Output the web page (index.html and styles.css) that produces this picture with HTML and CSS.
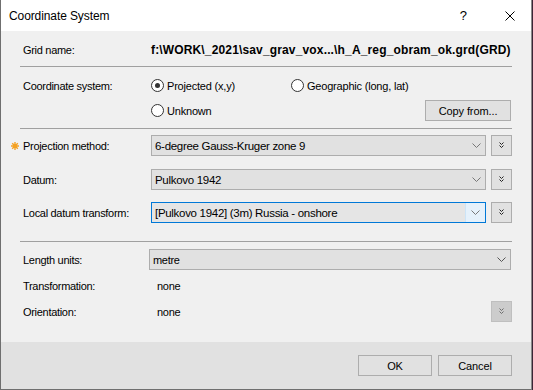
FILE: index.html
```html
<!DOCTYPE html>
<html lang="en">
<head>
  <meta charset="UTF-8">
  <title>Coordinate System</title>
  <link rel="stylesheet" href="styles.css">
</head>
<body>
<div class="window">
  <div class="titlebar">
    <span class="title">Coordinate System</span>
    <span class="help">?</span>
    <svg class="close" width="10" height="10" viewBox="0 0 10 10">
      <path d="M0.5 0.5 L9.5 9.5 M9.5 0.5 L0.5 9.5" stroke="#000" stroke-width="1" fill="none"/>
    </svg>
  </div>

  <div class="content">
    <div class="row row-grid">
      <span class="label">Grid name:</span>
      <span class="path">f:\WORK\_2021\sav_grav_vox...\h_A_reg_obram_ok.grd(GRD)</span>
    </div>
    <div class="sep"></div>

    <div class="row row-radio1">
      <span class="label">Coordinate system:</span>
      <div class="radios">
        <label class="radio radio-first"><span class="dot checked"></span>Projected (x,y)</label>
        <label class="radio"><span class="dot"></span>Geographic (long, lat)</label>
      </div>
    </div>
    <div class="row row-radio2">
      <span class="label"></span>
      <div class="radios">
        <label class="radio"><span class="dot"></span>Unknown</label>
        <button class="btn btn-copy">Copy from...</button>
      </div>
    </div>
    <div class="sep sep-2"></div>

    <div class="row row-proj">
      <span class="label"><svg class="star" width="8" height="8" viewBox="0 0 8 8">
        <path d="M4 0 V8 M0 4 H8 M1.2 1.2 L6.8 6.8 M6.8 1.2 L1.2 6.8" stroke="#f4a020" stroke-width="1.4" fill="none"/>
      </svg>Projection method:</span>
      <div class="combo-line">
        <div class="combo"><span>6-degree Gauss-Kruger zone 9</span><svg class="arrow" width="9" height="5" viewBox="0 0 9 5"><path d="M0.5 0.5 L4.5 4.5 L8.5 0.5" stroke="#777" fill="none"/></svg></div>
        <div class="more"><svg width="5" height="7" viewBox="0 0 5 7"><path d="M0.5 0.5 L2.5 2.5 L4.5 0.5 M0.5 3.5 L2.5 5.5 L4.5 3.5" stroke="#222" fill="none"/></svg></div>
      </div>
    </div>
    <div class="row row-datum">
      <span class="label">Datum:</span>
      <div class="combo-line">
        <div class="combo"><span>Pulkovo 1942</span><svg class="arrow" width="9" height="5" viewBox="0 0 9 5"><path d="M0.5 0.5 L4.5 4.5 L8.5 0.5" stroke="#777" fill="none"/></svg></div>
        <div class="more"><svg width="5" height="7" viewBox="0 0 5 7"><path d="M0.5 0.5 L2.5 2.5 L4.5 0.5 M0.5 3.5 L2.5 5.5 L4.5 3.5" stroke="#222" fill="none"/></svg></div>
      </div>
    </div>
    <div class="row row-local">
      <span class="label">Local datum transform:</span>
      <div class="combo-line">
        <div class="combo combo-focus"><span>[Pulkovo 1942] (3m) Russia - onshore</span><div class="drop"><svg class="arrow" width="9" height="5" viewBox="0 0 9 5"><path d="M0.5 0.5 L4.5 4.5 L8.5 0.5" stroke="#777" fill="none"/></svg></div></div>
        <div class="more"><svg width="5" height="7" viewBox="0 0 5 7"><path d="M0.5 0.5 L2.5 2.5 L4.5 0.5 M0.5 3.5 L2.5 5.5 L4.5 3.5" stroke="#222" fill="none"/></svg></div>
      </div>
    </div>
    <div class="sep sep-3"></div>

    <div class="row row-units">
      <span class="label">Length units:</span>
      <div class="combo combo-wide"><span>metre</span><svg class="arrow" width="9" height="5" viewBox="0 0 9 5"><path d="M0.5 0.5 L4.5 4.5 L8.5 0.5" stroke="#555" fill="none"/></svg></div>
    </div>
    <div class="row row-trans">
      <span class="label">Transformation:</span>
      <span class="value">none</span>
    </div>
    <div class="row row-orient">
      <span class="label">Orientation:</span>
      <div class="combo-line">
        <span class="value">none</span>
        <div class="more more-off"><svg width="5" height="7" viewBox="0 0 5 7"><path d="M0.5 0.5 L2.5 2.5 L4.5 0.5 M0.5 3.5 L2.5 5.5 L4.5 3.5" stroke="#6d6d6d" fill="none"/></svg></div>
      </div>
    </div>
  </div>

  <div class="footer">
    <button class="btn btn-ok">OK</button>
    <button class="btn btn-ok">Cancel</button>
  </div>
</div>
</body>
</html>
```

FILE: styles.css
```css
body {
  margin: 0;
  background: #3b2436;
  font-family: "Liberation Sans", Arial, sans-serif;
  font-size: 11px;
  color: #000;
}
.window {
  width: 530px;
  height: 389px;
  border-left: 1px solid #6f6f6f;
  border-right: 1px solid #8a8a8a;
  border-bottom: 1px solid #6f6f6f;
  background: #f0f0f0;
  display: flex;
  flex-direction: column;
}

/* title bar */
.titlebar {
  height: 31px;
  background: #fff;
  display: flex;
  align-items: center;
  flex-shrink: 0;
}
.title {
  font-size: 12px;
  letter-spacing: -0.1px;
  margin-left: 8px;
  flex: 1;
}
.help {
  font-size: 13px;
  margin-right: 38px;
}
.close {
  margin-right: 16px;
}

/* body */
.content {
  flex: 1;
  padding: 0 19px 0 19px;
}
.row {
  display: grid;
  grid-template-columns: 131px 1fr;
  align-items: center;
  height: 21px;
}
.label {
  padding-left: 3px;
  letter-spacing: -0.3px;
  white-space: nowrap;
  display: flex;
  align-items: center;
}
.star {
  margin-left: -12px;
  margin-right: 4px;
  flex-shrink: 0;
}
.row-grid {
  height: 35px;
  padding-top: 3px;
  box-sizing: border-box;
}
.path {
  font-weight: bold;
  font-size: 12px;
  letter-spacing: 0.15px;
  white-space: nowrap;
}
.sep {
  height: 1px;
  background: #a0a0a0;
}
.row-radio1 { margin-top: 8px; }
.row-radio2 { margin-top: 4px; }
.sep-2 { margin-top: 7px; }
.row-proj { margin-top: 6px; }
.row-datum { margin-top: 13px; }
.row-local { margin-top: 12px; }
.sep-3 { margin-top: 18px; }
.row-units { margin-top: 7px; }
.row-trans { margin-top: 5px; }
.row-orient { margin-top: 5px; }

.radios {
  display: flex;
  align-items: center;
}
.radio {
  display: flex;
  align-items: center;
  letter-spacing: -0.2px;
}
.radio-first {
  width: 140px;
}
.dot {
  width: 11px;
  height: 11px;
  border: 1px solid #333;
  border-radius: 50%;
  background: #fff;
  margin-right: 3px;
  position: relative;
}
.dot.checked::after {
  content: "";
  position: absolute;
  left: 3px;
  top: 3px;
  width: 5px;
  height: 5px;
  border-radius: 50%;
  background: #333;
}

.btn {
  font-family: "Liberation Sans", Arial, sans-serif;
  font-size: 11px;
  letter-spacing: -0.1px;
  background: #e1e1e1;
  border: 1px solid #adadad;
  height: 21px;
  padding: 0;
  color: #000;
}
.btn-copy {
  margin-left: auto;
  margin-right: 1px;
  width: 86px;
}

/* combo boxes */
.combo-line {
  display: flex;
  align-items: center;
  gap: 5px;
}
.combo {
  flex: 1;
  height: 21px;
  box-sizing: border-box;
  background: #e1e1e1;
  border: 1px solid #adadad;
  display: flex;
  align-items: center;
  padding-left: 3px;
  font-size: 11.5px;
  letter-spacing: -0.3px;
}
.combo span {
  flex: 1;
}
.combo .arrow {
  margin-right: 4px;
}
.combo-focus {
  border-color: #0078d7;
  background: #e5e5e5;
}
.combo-focus .drop {
  width: 19px;
  height: 19px;
  background: #e5f1fb;
  border-left: 1px solid #cce4f7;
  display: flex;
  align-items: center;
  justify-content: flex-end;
}
.combo-focus .drop .arrow {
  margin-right: 5px;
}
.combo-wide {
  margin-left: -2px;
  margin-right: 1px;
  font-size: 11px;
}
.more {
  width: 21px;
  height: 21px;
  box-sizing: border-box;
  background: #e1e1e1;
  border: 1px solid #adadad;
  display: flex;
  align-items: center;
  justify-content: center;
}
.more-off {
  background: #cccccc;
  border-color: #bfbfbf;
}
.value {
  flex: 1;
  padding-left: 6px;
  letter-spacing: -0.3px;
}

/* footer */
.footer {
  height: 47px;
  flex-shrink: 0;
  background: #e1e1e1;
  display: flex;
  justify-content: flex-end;
  align-items: flex-start;
  gap: 6px;
  padding: 13px 19px 0 0;
  box-sizing: border-box;
}
.btn-ok {
  width: 74px;
}
```
